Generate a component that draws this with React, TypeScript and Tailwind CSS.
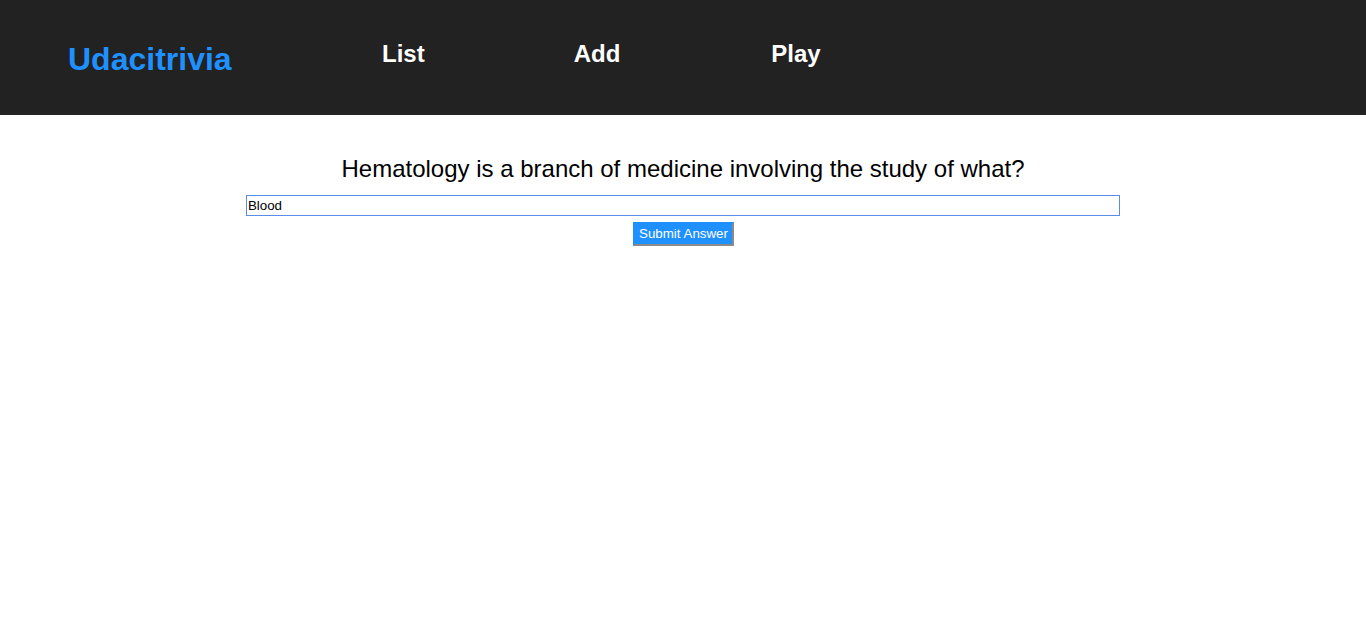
import { useState } from "react";

const Header = () => {
  return (
    <div className="flex h-[115px] items-start bg-[#222222] pl-[68px]">
      <h1 className="mt-[43px] w-[163px] text-[32px] font-bold leading-[32px] text-[#1e90ff]">
        Udacitrivia
      </h1>
      <div className="ml-[151px] flex">
        <h2 className="mt-[42px] text-[24px] font-bold leading-[24px] text-white">
          List
        </h2>
        <h2 className="ml-[149px] mt-[42px] text-[24px] font-bold leading-[24px] text-white">
          Add
        </h2>
        <h2 className="ml-[151px] mt-[42px] text-[24px] font-bold leading-[24px] text-white">
          Play
        </h2>
      </div>
    </div>
  );
};

const App = () => {
  const [answer, setAnswer] = useState("Blood");

  return (
    <div
      className="min-h-[635px] bg-white"
      style={{ fontFamily: '"Liberation Sans", Arial, sans-serif' }}
    >
      <Header />
      <div className="flex flex-col items-center">
        <div className="mt-[42px] text-[24px] leading-[24px] text-black">
          Hematology is a branch of medicine involving the study of what?
        </div>
        <input
          type="text"
          value={answer}
          onChange={(e) => setAnswer(e.target.value)}
          className="mt-[14px] h-[21px] w-[64%] border border-solid border-[#5a8de8] bg-white px-[1px] text-[13.33px] leading-[17px] text-black outline-none"
        />
        <button className="ml-[1px] mt-[6px] h-[24px] border-2 border-t-[#1e90ff] border-l-[#1e90ff] border-r-[#8a8a8a] border-b-[#8a8a8a] bg-[#1e90ff] px-[4px] text-[13.33px] leading-[16px] text-white">
          Submit Answer
        </button>
      </div>
    </div>
  );
};

export default App;
